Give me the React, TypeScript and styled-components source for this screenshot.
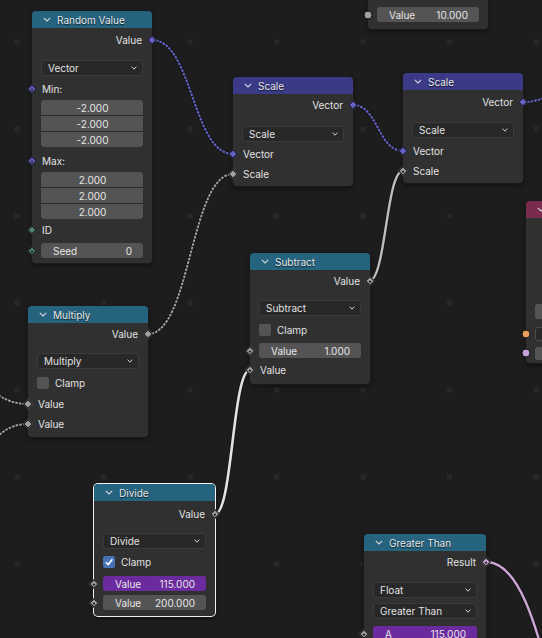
import React from "react";
import styled, { createGlobalStyle, css } from "styled-components";

const Global = createGlobalStyle`
  html, body { margin: 0; padding: 0; background: #1d1d1d; }
  #root { width: 542px; height: 638px; }
`;

const VEC = "#6363c7";
const FLT = "#a1a1a1";
const INT = "#4e7f78";
const BOOL = "#cca6d6";
const TEAL = "#25637f";
const VECHDR = "#3b3a87";
const MAROON = "#7a2a4c";

const Canvas = styled.div`
  position: relative;
  width: 542px;
  height: 638px;
  overflow: hidden;
  background: #1d1d1d;
  font-family: Inter, "DejaVu Sans", sans-serif;
  font-size: 10px;
  color: #e2e2e2;
`;

const LinkLayer = styled.svg`
  position: absolute;
  left: 0;
  top: 0;
  width: 542px;
  height: 638px;
`;

const NodeBox = styled.div<{ $x: number; $y: number; $w: number; $selected?: boolean }>`
  position: absolute;
  left: ${(p) => p.$x}px;
  top: ${(p) => p.$y}px;
  width: ${(p) => p.$w}px;
  background: #303030;
  border-radius: 4px;
  box-shadow: ${(p) =>
    p.$selected
      ? "0 0 0 1px #f2f2f2, 0 2px 5px rgba(0,0,0,0.55)"
      : "0 0 0 1px #1a1a1a, 0 2px 5px rgba(0,0,0,0.55)"};
`;

const Header = styled.div<{ $color: string }>`
  height: 17px;
  background: ${(p) => p.$color};
  border-radius: 4px 4px 0 0;
  display: flex;
  align-items: center;
  gap: 6px;
  padding-left: 11px;
  font-size: 10px;
  color: #e8e8e8;
  text-shadow: 0 1px 1px rgba(0, 0, 0, 0.7);
  white-space: nowrap;
  overflow: hidden;
`;

const Body = styled.div<{ $pb: number }>`
  display: flex;
  flex-direction: column;
  padding-bottom: ${(p) => p.$pb}px;
`;

const Row = styled.div<{ $mt?: number; $h?: number; $out?: boolean; $widget?: boolean }>`
  position: relative;
  height: ${(p) => p.$h ?? 20}px;
  margin-top: ${(p) => p.$mt ?? 0}px;
  display: flex;
  align-items: center;
  justify-content: ${(p) => (p.$out ? "flex-end" : "flex-start")};
  padding: ${(p) => (p.$widget ? "0 9px" : "0 10px")};
  white-space: nowrap;
`;

type Shape = "diamond" | "dot" | "circle";

const Socket = styled.span<{ $side: "left" | "right"; $color: string; $shape: Shape }>`
  position: absolute;
  top: 50%;
  ${(p) => p.$side}: 0;
  box-sizing: border-box;
  background: ${(p) => p.$color};
  border: 1px solid #141414;
  z-index: 2;
  ${(p) =>
    p.$shape === "circle"
      ? css`
          width: 9px;
          height: 9px;
          border-radius: 50%;
          transform: translate(${p.$side === "left" ? "-50%" : "50%"}, -50%);
        `
      : css`
          width: 7px;
          height: 7px;
          transform: translate(${p.$side === "left" ? "-50%" : "50%"}, -50%) rotate(45deg);
        `}
  ${(p) =>
    p.$shape === "dot" &&
    css`
      &::after {
        content: "";
        position: absolute;
        left: 50%;
        top: 50%;
        width: 2px;
        height: 2px;
        background: #1e1e1e;
        transform: translate(-50%, -50%);
      }
    `}
`;

const Dropdown = styled.div`
  flex: 1;
  height: 16px;
  box-sizing: border-box;
  background: #282828;
  border: 1px solid #3b3b3b;
  border-radius: 3px;
  display: flex;
  align-items: center;
  justify-content: space-between;
  padding: 0 5px 0 6px;
  color: #e0e0e0;
`;

const FieldStack = styled.div`
  flex: 1;
  display: flex;
  flex-direction: column;
  gap: 1px;
  border-radius: 3px;
  overflow: hidden;
  background: #2a2a2a;
`;

const Field = styled.div<{ $purple?: boolean; $split?: boolean; $h?: number }>`
  flex: 1;
  height: ${(p) => p.$h ?? 15}px;
  box-sizing: border-box;
  background: ${(p) => (p.$purple ? "#6c2a9f" : "#545454")};
  border-radius: 3px;
  display: flex;
  align-items: center;
  justify-content: ${(p) => (p.$split ? "space-between" : "center")};
  padding: 0 11px 0 12px;
  color: #e6e6e6;
`;

const StackField = styled(Field)`
  flex: none;
  border-radius: 0;
`;

const Check = styled.div<{ $on?: boolean }>`
  width: 12px;
  height: 12px;
  box-sizing: border-box;
  border-radius: 2px;
  background: ${(p) => (p.$on ? "#4772b3" : "#545454")};
  margin-right: 6px;
  display: flex;
  align-items: center;
  justify-content: center;
`;

const DarkBox = styled.div<{ $h: number }>`
  flex: 1;
  height: ${(p) => p.$h}px;
  box-sizing: border-box;
  background: #282828;
  border: 1px solid #4a4a4a;
  border-radius: 3px;
`;

const Chevron = () => (
  <svg width="8" height="5" viewBox="0 0 8 5">
    <path d="M0.8 0.8 L4 4 L7.2 0.8" fill="none" stroke="#d8d8d8" strokeWidth="1.1" />
  </svg>
);

const SmallChevron = () => (
  <svg width="6" height="4" viewBox="0 0 6 4">
    <path d="M0.6 0.6 L3 3.2 L5.4 0.6" fill="none" stroke="#d0d0d0" strokeWidth="1" />
  </svg>
);

const Tick = () => (
  <svg width="10" height="10" viewBox="0 0 10 10">
    <path d="M1.8 5.2 L4.2 7.6 L8.4 2.2" fill="none" stroke="#fff" strokeWidth="1.6" />
  </svg>
);

type NodeProps = {
  x: number;
  y: number;
  w?: number;
  title?: string;
  color: string;
  selected?: boolean;
  pb?: number;
  children: React.ReactNode;
};

const Node = ({ x, y, w = 120, title, color, selected, pb = 0, children }: NodeProps) => (
  <NodeBox $x={x} $y={y} $w={w} $selected={selected}>
    <Header $color={color}>
      <Chevron />
      {title && <span>{title}</span>}
    </Header>
    <Body $pb={pb}>{children}</Body>
  </NodeBox>
);

const Out = ({ label, mt, color, shape = "diamond" }: { label?: string; mt?: number; color: string; shape?: Shape }) => (
  <Row $mt={mt} $out>
    {label}
    <Socket $side="right" $color={color} $shape={shape} />
  </Row>
);

const In = ({ label, mt, color, shape = "diamond" }: { label: string; mt?: number; color: string; shape?: Shape }) => (
  <Row $mt={mt}>
    {label}
    <Socket $side="left" $color={color} $shape={shape} />
  </Row>
);

const Select = ({ label, mt }: { label: string; mt?: number }) => (
  <Row $mt={mt} $h={16} $widget>
    <Dropdown>
      <span>{label}</span>
      <SmallChevron />
    </Dropdown>
  </Row>
);

const Clamp = ({ mt, on }: { mt?: number; on?: boolean }) => (
  <Row $mt={mt} $widget>
    <Check $on={on}>{on && <Tick />}</Check>
    Clamp
  </Row>
);

const ValueField = ({
  label,
  value,
  mt,
  purple,
  socket,
}: {
  label: string;
  value: string;
  mt?: number;
  purple?: boolean;
  socket?: { color: string; shape: Shape };
}) => (
  <Row $mt={mt} $h={15} $widget>
    <Field $purple={purple} $split>
      <span>{label}</span>
      <span>{value}</span>
    </Field>
    {socket && <Socket $side="left" $color={socket.color} $shape={socket.shape} />}
  </Row>
);

const Stack = ({ values, mt }: { values: string[]; mt?: number }) => (
  <Row $mt={mt} $h={47} $widget>
    <FieldStack>
      {values.map((v, i) => (
        <StackField key={i}>{v}</StackField>
      ))}
    </FieldStack>
  </Row>
);

const bez = (x1: number, y1: number, x2: number, y2: number) => {
  const d = Math.max(Math.abs(x2 - x1) * 0.5, 12);
  return `M${x1},${y1} C${x1 + d},${y1} ${x2 - d},${y2} ${x2},${y2}`;
};

type LinkDef = { a: [number, number]; b: [number, number]; color: string; dashed?: boolean; w?: number };

const links: LinkDef[] = [
  { a: [152, 40], b: [233, 154], color: VEC, dashed: true },
  { a: [353, 105], b: [403, 151], color: VEC, dashed: true },
  { a: [523, 102], b: [640, 20], color: VEC, dashed: true },
  { a: [148, 334], b: [233, 174], color: "#9c9c9c", dashed: true },
  { a: [-60, 360], b: [28, 404], color: "#9c9c9c", dashed: true },
  { a: [-60, 480], b: [28, 424], color: "#9c9c9c", dashed: true },
  { a: [369, 281], b: [403, 171], color: "#bdbdbd", w: 2.4 },
  { a: [215, 514], b: [250, 370], color: "#e2e2e2", w: 2.6 },
  { a: [486, 562], b: [620, 820], color: BOOL, w: 2.4 },
];

const Links = () => (
  <LinkLayer viewBox="0 0 542 638">
    <defs>
      <pattern id="grid" x="14.5" y="39.5" width="86.5" height="87" patternUnits="userSpaceOnUse">
        <rect width="5" height="5" fill="#282828" />
      </pattern>
    </defs>
    <rect width="542" height="638" fill="url(#grid)" />
    {links.map((l, i) => {
      const d = bez(l.a[0], l.a[1], l.b[0], l.b[1]);
      const w = l.w ?? 2;
      return (
        <g key={i}>
          <path d={d} fill="none" stroke="#161616" strokeWidth={w + 1.8} />
          <path
            d={d}
            fill="none"
            stroke={l.color}
            strokeWidth={w}
            strokeDasharray={l.dashed ? "2.6 1.1" : undefined}
          />
        </g>
      );
    })}
  </LinkLayer>
);

export default function App() {
  return (
    <>
      <Global />
      <Canvas>
        <Links />

        {/* top partially visible node */}
        <Node x={368} y={-50} color={TEAL} pb={7}>
          <ValueField label="Value" value="10.000" mt={40} socket={{ color: FLT, shape: "circle" }} />
        </Node>

        <Node x={32} y={11} title="Random Value" color={TEAL} pb={5}>
          <Out label="Value" mt={2} color={VEC} />
          <Select label="Vector" mt={10} />
          <In label="Min:" mt={3} color={VEC} shape="dot" />
          <Stack values={["-2.000", "-2.000", "-2.000"]} mt={1} />
          <In label="Max:" mt={4} color={VEC} shape="dot" />
          <Stack values={["2.000", "2.000", "2.000"]} mt={1} />
          <In label="ID" mt={1} color={INT} />
          <ValueField label="Seed" value="0" mt={3} socket={{ color: INT, shape: "dot" }} />
        </Node>

        <Node x={233} y={77} title="Scale" color={VECHDR} pb={2}>
          <Out label="Vector" mt={1} color={VEC} />
          <Select label="Scale" mt={11} />
          <In label="Vector" mt={2} color={VEC} />
          <In label="Scale" color={FLT} />
        </Node>

        <Node x={403} y={73} title="Scale" color={VECHDR} pb={2}>
          <Out label="Vector" mt={2} color={VEC} />
          <Select label="Scale" mt={10} />
          <In label="Vector" mt={3} color={VEC} />
          <In label="Scale" color={FLT} shape="dot" />
        </Node>

        <Node x={526} y={201} w={150} color={MAROON} pb={3}>
          <Out mt={2} color={FLT} />
          <Out color={FLT} />
          <Row $mt={44} $h={15} $widget>
            <Field />
          </Row>
          <Row $mt={8} $h={14} $widget>
            <DarkBox $h={14} />
            <Socket $side="left" $color="#e89c5a" $shape="circle" />
          </Row>
          <Row $mt={5} $h={14} $widget>
            <Field $h={13} />
            <Socket $side="left" $color="#c6a2d8" $shape="circle" />
          </Row>
        </Node>

        <Node x={250} y={253} title="Subtract" color={TEAL} pb={4}>
          <Out label="Value" mt={1} color={FLT} shape="dot" />
          <Select label="Subtract" mt={9} />
          <Clamp mt={4} />
          <ValueField label="Value" value="1.000" mt={3} socket={{ color: FLT, shape: "dot" }} />
          <In label="Value" mt={2} color={FLT} shape="dot" />
        </Node>

        <Node x={28} y={306} title="Multiply" color={TEAL} pb={3}>
          <Out label="Value" mt={1} color={FLT} />
          <Select label="Multiply" mt={9} />
          <Clamp mt={4} />
          <In label="Value" mt={1} color={FLT} />
          <In label="Value" color={FLT} />
        </Node>

        <Node x={94} y={484} w={121} title="Divide" color={TEAL} selected pb={6}>
          <Out label="Value" mt={3} color={FLT} shape="dot" />
          <Select label="Divide" mt={9} />
          <Clamp mt={3} on />
          <ValueField label="Value" value="115.000" mt={4} purple socket={{ color: FLT, shape: "dot" }} />
          <ValueField label="Value" value="200.000" mt={4} socket={{ color: FLT, shape: "dot" }} />
        </Node>

        <Node x={364} y={534} w={122} title="Greater Than" color={TEAL} pb={6}>
          <Out label="Result" mt={1} color={BOOL} shape="dot" />
          <Select label="Float" mt={10} />
          <Select label="Greater Than" mt={5} />
          <ValueField label="A" value="115.000" mt={7} purple socket={{ color: FLT, shape: "dot" }} />
          <ValueField label="B" value="0.000" mt={4} socket={{ color: FLT, shape: "dot" }} />
        </Node>
      </Canvas>
    </>
  );
}
